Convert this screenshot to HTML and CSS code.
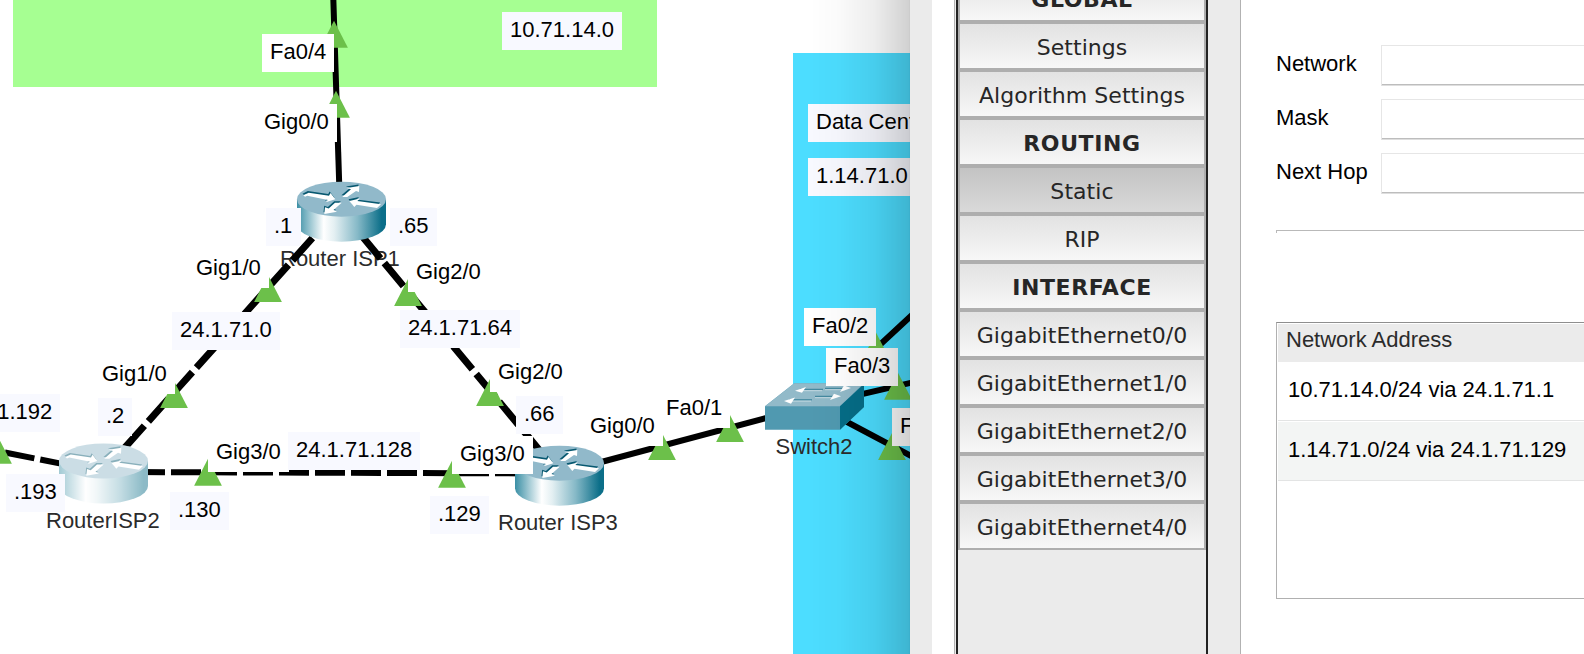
FILE: index.html
```html
<!DOCTYPE html>
<html lang="en">
<head>
<meta charset="utf-8">
<title>Network topology - Router configuration</title>
<link rel="stylesheet" href="styles.css">
</head>
<body>
<div class="app">
  <main class="canvas">
    <div class="zone zone-office"></div>
    <div class="zone zone-data"></div>
    <svg class="topology" width="910" height="654" viewBox="0 0 910 654">
      <defs>
        <linearGradient id="metal" x1="0" x2="1" y1="0" y2="0">
          <stop offset="0" stop-color="#3a8fa5"/>
          <stop offset=".3" stop-color="#fff"/>
          <stop offset=".42" stop-color="#e3eff2"/>
          <stop offset=".68" stop-color="#86b9c7"/>
          <stop offset=".95" stop-color="#0c6f89"/>
          <stop offset="1" stop-color="#0c6f89"/>
        </linearGradient>
        <g id="arrows">
          <path d="M6.3 13.6 11.7 11 32 14 33.5 11.3 38.3 17.6 28.7 20.6 31 18.2 10.3 14 8 15z"/>
          <path d="M52.3 19.2 63 16.9 60.3 19.3 84 22.5 80 26.2 59.5 23 57.3 25.3z"/>
          <path d="M62.3 4.3 62 10.3 59 9.2 50.3 15.2 45.2 15.2 54 7.6 49.7 6.3z"/>
          <path d="M27.3 32.2 28 25.6 31.7 26.8 38 21.1 44.7 21.1 36.5 28.2 40 30z"/>
        </g>
        <g id="router">
          <path d="M0 17.5V42.5A44.5 17.5 0 0 0 89 42.5V17.5z" fill="url(#metal)"/>
          <ellipse cx="44.5" cy="17.5" rx="44.5" ry="17.5" fill="#91b9ca"/>
          <use href="#arrows" x="-.8" y="-1.6" fill="#075870"/>
          <use href="#arrows" fill="#fff"/>
        </g>
        <path id="up" d="M0 0 13.9 27H-13.9z"/>
      </defs>

      <g class="node-name">
        <text x="280" y="265.7">Router ISP1</text>
        <text x="46" y="527.7">RouterISP2</text>
        <text x="498" y="529.7">Router ISP3</text>
        <text x="775.5" y="453.7">Switch2</text>
      </g>

      <g class="link">
        <path d="M333.3 -2 339.4 190"/>
        <path d="M560 473 815 405"/>
        <path d="M815 405 912 315M815 405 912 382.5M815 405 912 456.5"/>
        <path class="dashed diagonal" stroke-dashoffset="-8.3" d="M342 205 103 472"/>
        <path class="dashed diagonal" stroke-dashoffset="5.7" d="M342 212 560 475"/>
        <path class="dashed" stroke-dashoffset="0" d="M99 472 560 473.5"/>
        <path class="dashed" stroke-dashoffset="2" d="M103 472-5 450.5"/>
      </g>

      <g class="status">
        <use href="#up" x="334" y="20.7"/>
        <use href="#up" x="336" y="90.7"/>
        <use href="#up" x="268" y="275"/>
        <use href="#up" x="408" y="279"/>
        <use href="#up" x="174" y="381"/>
        <use href="#up" x="208" y="458.7"/>
        <use href="#up" x="452" y="460.8"/>
        <use href="#up" x="490" y="379"/>
        <use href="#up" x="662" y="433"/>
        <use href="#up" x="730" y="415"/>
        <use href="#up" x="876" y="332.5"/>
        <use href="#up" x="898" y="372.8"/>
        <use href="#up" x="892" y="433"/>
        <use href="#up" x="-2" y="436.8"/>
      </g>

      <use href="#router" x="297" y="181.7"/>
      <path d="M59 461V486A44.5 17.5 0 0 0 148 486V461A44.5 17.5 0 0 0 59 461z" fill="#fff"/>
      <use href="#router" class="faded" x="59" y="443.5"/>
      <use href="#router" x="515" y="445.7"/>

      <path d="M765 406.3 794.3 383.3H864V407L840 429.7H765z" fill="#5099b0"/>
      <path d="M765 406.3 794.3 383.3H864L840 406.3z" fill="#92bac9"/>
      <path d="M840 406.3 864 384V407L840 429.7z" fill="#056d87"/>
      <g stroke="#337f96" stroke-width="1" fill="none">
        <path d="M800 389.3H823M825 388.3H846M789 399.8H812M815 396.3H834"/>
      </g>
      <g fill="#fff">
        <path d="M795 390.8 806 387 802 392.8z"/>
        <path d="M784 401 795 397.5 791 403.8z"/>
        <path d="M851 388 840 392 844 385.5z"/>
        <path d="M841 396.3 830 400 834 393.8z"/>
        <path d="M803 390H822V391.3H803zM825 389H845V390.3H825zM792 400.5H811V401.8H792zM815 397H833V398.3H815z" opacity=".35"/>
      </g>
    </svg>

    <span class="port p-fa04">Fa0/4</span>
    <span class="port p-r1-g0">Gig0/0</span>
    <span class="port p-r1-g1">Gig1/0</span>
    <span class="port p-r1-g2">Gig2/0</span>
    <span class="port p-r2-g1">Gig1/0</span>
    <span class="port p-r2-g3">Gig3/0</span>
    <span class="port p-r3-g2">Gig2/0</span>
    <span class="port p-r3-g3">Gig3/0</span>
    <span class="port p-r3-g0">Gig0/0</span>
    <span class="port p-fa01">Fa0/1</span>
    <span class="port p-fa02">Fa0/2</span>
    <span class="port p-fa03">Fa0/3</span>
    <span class="port p-fa-last">Fa0/4</span>

    <span class="note n-office">10.71.14.0</span>
    <span class="note n-1">.1</span>
    <span class="note n-65">.65</span>
    <span class="note n-net0">24.1.71.0</span>
    <span class="note n-net64">24.1.71.64</span>
    <span class="note n-net128">24.1.71.128</span>
    <span class="note n-net192">24.1.71.192</span>
    <span class="note n-2">.2</span>
    <span class="note n-193">.193</span>
    <span class="note n-130">.130</span>
    <span class="note n-129">.129</span>
    <span class="note n-66">.66</span>
    <span class="note n-data">Data Center</span>
    <span class="note n-datanet">1.14.71.0</span>
    <div class="window-shadow"></div>
  </main>

  <section class="dialog">
    <div class="dialog-edge"></div>
    <nav class="menu">
      <div class="menu-item heading">GLOBAL</div>
      <div class="menu-item">Settings</div>
      <div class="menu-item">Algorithm Settings</div>
      <div class="menu-item heading">ROUTING</div>
      <div class="menu-item selected">Static</div>
      <div class="menu-item">RIP</div>
      <div class="menu-item heading">INTERFACE</div>
      <div class="menu-item">GigabitEthernet0/0</div>
      <div class="menu-item">GigabitEthernet1/0</div>
      <div class="menu-item">GigabitEthernet2/0</div>
      <div class="menu-item">GigabitEthernet3/0</div>
      <div class="menu-item">GigabitEthernet4/0</div>
    </nav>
    <div class="gutter"></div>
    <div class="panel">
      <form class="route-form">
        <label class="field"><span>Network</span><input type="text"></label>
        <label class="field"><span>Mask</span><input type="text"></label>
        <label class="field"><span>Next Hop</span><input type="text"></label>
      </form>
      <div class="divider"></div>
      <div class="routes">
        <div class="routes-head">Network Address</div>
        <div class="route">10.71.14.0/24 via 24.1.71.1</div>
        <div class="route alt">1.14.71.0/24 via 24.1.71.129</div>
      </div>
    </div>
  </section>
</div>
</body>
</html>
```
FILE: styles.css
```css
* { box-sizing: border-box; }

body {
  margin: 0;
  background: #fff;
  font-family: "Liberation Sans", Arial, sans-serif;
  font-size: 22px;
  color: #000;
}

.app {
  display: flex;
  width: 1584px;
  height: 654px;
  overflow: hidden;
}

/* Topology canvas */
.canvas {
  position: relative;
  flex: 0 0 910px;
  overflow: hidden;
}
.zone { position: absolute; }
.zone-office { left: 13px; top: 0; width: 644px; height: 87px; background: #a6ff92; }
.zone-data { left: 793px; top: 53px; width: 117px; height: 601px; background: #4cddff; }
.topology { position: absolute; left: 0; top: 0; }

.node-name { fill: #2b2b2b; }
.link { stroke: #000; stroke-width: 6; fill: none; }
.dashed { stroke-dasharray: 30 6; }
.diagonal { stroke-width: 7; }
.status { fill: #6cc04a; }
.faded { opacity: .47; }

.port, .note {
  position: absolute;
  height: 38px;
  padding: 0 8px;
  line-height: 35px;
  white-space: nowrap;
}
.port { background: #fff; }
.note { background: #f8f9ff; }

.p-fa04 { left: 262px; top: 34px; }
.p-r1-g0 { left: 256px; top: 104px; }
.p-r1-g1 { left: 188px; top: 250px; }
.p-r1-g2 { left: 408px; top: 254px; }
.p-r2-g1 { left: 94px; top: 356px; }
.p-r2-g3 { left: 208px; top: 434px; }
.p-r3-g2 { left: 490px; top: 354px; }
.p-r3-g3 { left: 452px; top: 436px; }
.p-r3-g0 { left: 582px; top: 408px; }
.p-fa01 { left: 658px; top: 390px; }
.p-fa02 { left: 804px; top: 308px; }
.p-fa03 { left: 826px; top: 348px; }
.p-fa-last { left: 892px; top: 408px; }

.n-office { left: 502px; top: 12px; }
.n-1 { left: 266px; top: 208px; width: 35px; }
.n-65 { left: 390px; top: 208px; }
.n-net0 { left: 172px; top: 312px; }
.n-net64 { left: 400px; top: 310px; }
.n-net128 { left: 288px; top: 432px; }
.n-net192 { left: -72px; top: 394px; }
.n-2 { left: 98px; top: 398px; }
.n-193 { left: 6px; top: 474px; }
.n-130 { left: 170px; top: 492px; }
.n-129 { left: 430px; top: 496px; }
.n-66 { left: 516px; top: 396px; }
.n-data { left: 808px; top: 104px; }
.n-datanet { left: 808px; top: 158px; }

.window-shadow {
  position: absolute;
  inset: 0 0 0 auto;
  width: 100px;
  border-right: 1px solid rgba(0, 0, 0, .2);
  background: linear-gradient(90deg, transparent, rgba(0, 0, 0, .02) 30%, rgba(0, 0, 0, .07) 65%, rgba(0, 0, 0, .18));
}

/* Configuration window */
.dialog {
  display: flex;
  flex: 0 0 674px;
  background: #fff;
}
.dialog-edge { width: 22px; margin-right: 22px; background: #ebebeb; }

.menu {
  position: relative;
  display: flex;
  flex-direction: column;
  width: 254px;
  height: 680px;
  margin-top: -26px;
  border-left: 1px solid #b2b2b2;
  padding-left: 1px;
  background: #ebebeb;
  font-family: "DejaVu Sans", Verdana, sans-serif;
  color: #262626;
}
.menu::before, .menu::after {
  content: "";
  position: absolute;
  top: 0;
  bottom: 0;
  width: 2px;
  background: #222;
}
.menu::before { left: 1px; }
.menu::after { right: 0; }
.menu-item {
  height: 48px;
  margin: 0 2px;
  border: 2px solid #aeaeae;
  background: linear-gradient(#e2e2e2, #f7f7f7);
  line-height: 48px;
  letter-spacing: .06px;
  text-align: center;
  white-space: nowrap;
}
.heading { font-weight: bold; letter-spacing: .6px; }
.selected { background: linear-gradient(#c3c3c3, #d9d9d9); }

.gutter { width: 33px; border-right: 1px solid #b2b2b2; background: #ebebeb; }

.panel {
  flex: 1;
  min-width: 0;
  padding: 45px 0 0 35px;
}
.route-form { display: flex; flex-direction: column; gap: 13px; }
.field { display: flex; height: 41px; line-height: 36px; }
.field span { width: 105px; padding-top: 1px; white-space: nowrap; }
.field input {
  flex: 1;
  min-width: 0;
  padding: 0;
  border: 1px solid #e6e6e6;
  border-right: 0;
  border-bottom: 1px solid #dedede;
  box-shadow: inset 0 -1px #bdbdbd;
  outline: 0;
  background: #fff;
}
.divider {
  height: 3px;
  margin-top: 36px;
  border-top: 1px solid #b9b9b9;
  border-left: 1px solid #b9b9b9;
}
.routes {
  height: 277px;
  margin-top: 89px;
  border: 1px solid #b0b0b0;
  border-top-color: #8e8e8e;
  border-right: 0;
  padding: 1px 0 0 1px;
}
.routes-head {
  height: 38px;
  padding-left: 8px;
  background: #ebebeb;
  line-height: 31px;
  color: #2b2b2b;
}
.route {
  height: 59px;
  padding-left: 10px;
  border-bottom: 1px solid #e3e4e4;
  line-height: 55px;
  letter-spacing: -.02px;
  white-space: nowrap;
}
.route.alt { height: 60px; border-top: 1px solid #fff; background: #f3f5f4; }
```
